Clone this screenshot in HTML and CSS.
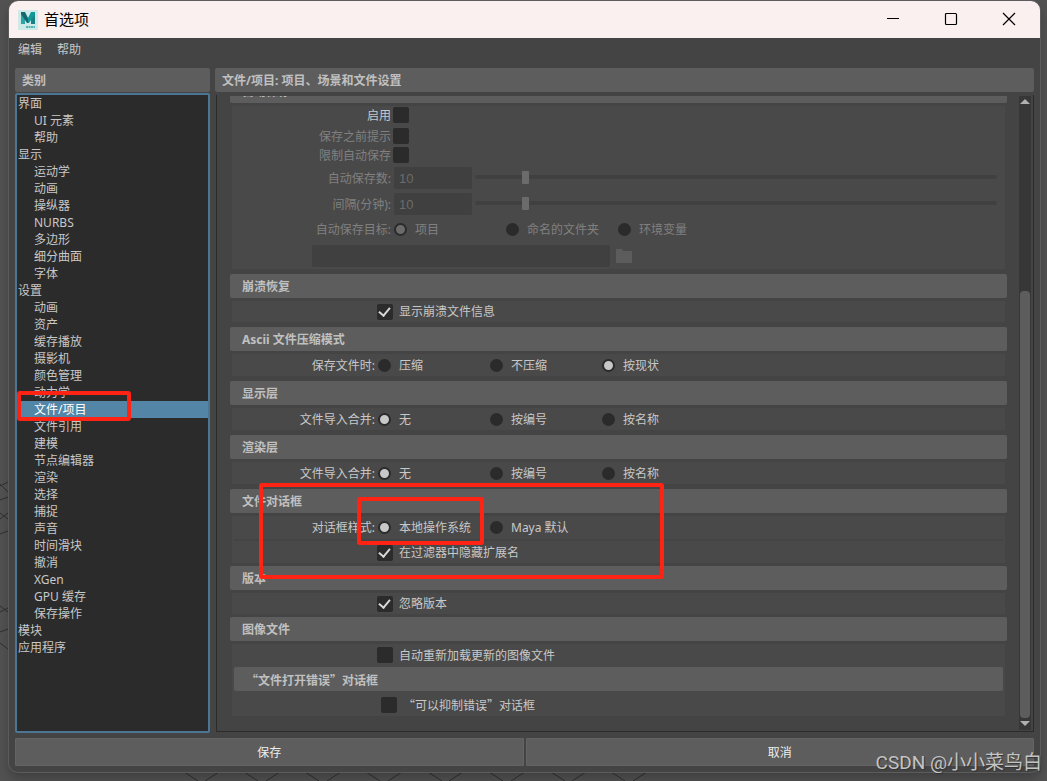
FILE: index.html
```html
<!DOCTYPE html>
<html lang="zh-CN">
<head>
  <meta charset="UTF-8" />
  <title>首选项</title>
  <link rel="stylesheet" href="styles.css">
</head>
<body>

  <!-- viewport grid behind the window -->
  <svg class="grid-lines bottom" width="1047" height="9" viewBox="0 0 1047 9" aria-hidden="true">
    <path d="M184 0l14 9M219 0l-14 9M244 0l14 9M280 0l-14 9M305 0l14 9M341 0l-14 9M366 0l14 9M402 0l-14 9M428 0l14 9M463 0l-14 9M489 0l14 9M525 0l-14 9M551 0l14 9M586 0l-14 9M611 0l14 9M647 0l-14 9" />
  </svg>
  <svg class="grid-lines left" width="9" height="781" viewBox="0 0 9 781" aria-hidden="true">
    <path d="M0 486l8-4M0 484l8 8M0 500l8-3M0 513l8 6M0 519l8-6M0 534l8-3M0 606l8 6M0 612l8-4M0 632l8-3M0 643l8 6" />
  </svg>

  <div class="window">
    <header class="titlebar">
      <svg class="logo" width="20" height="20" viewBox="0 0 20 20" aria-hidden="true">
        <rect width="20" height="20" fill="#cfe9e8" />
        <path d="M3 2h4v12H3z" fill="#2ba5a5" />
        <path d="M13 2h4v12h-4z" fill="#1b7f86" />
        <path d="M3 2h4l3 6v5H9L3 4z" fill="#16666d" />
        <path d="M17 2h-4l-3 6v5h1l6-9z" fill="#0f9a9a" />
        <path d="M8 17h9" stroke="#4fb5b5" stroke-width="2" stroke-dasharray="2 .5" />
      </svg>
      <h1>首选项</h1>
      <div class="window-buttons">
        <button type="button" aria-label="最小化">
          <svg width="14" height="14" viewBox="0 0 14 14"><path d="M1 6.500h12" /></svg>
        </button>
        <button type="button" aria-label="最大化">
          <svg width="14" height="14" viewBox="0 0 14 14"><rect x="1.500" y="1.500" width="11" height="11" rx="1" /></svg>
        </button>
        <button type="button" aria-label="关闭">
          <svg width="14" height="14" viewBox="0 0 14 14"><path d="M1 1l12 12M13 1L1 13" /></svg>
        </button>
      </div>
    </header>

    <nav class="menubar">
      <a href="#">编辑</a>
      <a href="#">帮助</a>
    </nav>

    <main class="content">
      <aside class="categories">
        <h2 class="bar">类别</h2>
        <ul class="tree">
          <li class="root">界面</li>
          <li>UI 元素</li>
          <li>帮助</li>
          <li class="root">显示</li>
          <li>运动学</li>
          <li>动画</li>
          <li>操纵器</li>
          <li>NURBS</li>
          <li>多边形</li>
          <li>细分曲面</li>
          <li>字体</li>
          <li class="root">设置</li>
          <li>动画</li>
          <li>资产</li>
          <li>缓存播放</li>
          <li>摄影机</li>
          <li>颜色管理</li>
          <li>动力学</li>
          <li class="selected">文件/项目<span class="mark mark-item"></span></li>
          <li>文件引用</li>
          <li>建模</li>
          <li>节点编辑器</li>
          <li>渲染</li>
          <li>选择</li>
          <li>捕捉</li>
          <li>声音</li>
          <li>时间滑块</li>
          <li>撤消</li>
          <li>XGen</li>
          <li>GPU 缓存</li>
          <li>保存操作</li>
          <li class="root">模块</li>
          <li class="root">应用程序</li>
        </ul>
      </aside>

      <section class="settings">
        <h2 class="bar">文件/项目: 项目、场景和文件设置</h2>
        <div class="pane">
          <div class="sections">

            <section class="group">
              <h3 class="bar">自动保存</h3>
              <div class="group-body autosave">
                <div class="row"><label class="name" for="enable">启用</label><input type="checkbox" id="enable"></div>
                <div class="row off"><label class="name" for="prompt">保存之前提示</label><input type="checkbox" id="prompt"></div>
                <div class="row off"><label class="name" for="limit">限制自动保存</label><input type="checkbox" id="limit"></div>
                <div class="row off">
                  <label class="name" for="count">自动保存数:</label>
                  <input type="text" class="number" id="count" value="10" disabled>
                  <input type="range" min="1" max="100" value="10" aria-label="自动保存数" disabled>
                </div>
                <div class="row off">
                  <label class="name" for="interval">间隔(分钟):</label>
                  <input type="text" class="number" id="interval" value="10" disabled>
                  <input type="range" min="1" max="100" value="10" aria-label="间隔(分钟)" disabled>
                </div>
                <div class="row off target">
                  <span class="name">自动保存目标:</span>
                  <label class="radio"><input type="radio" name="target" checked disabled>项目</label>
                  <label class="radio"><input type="radio" name="target" disabled>命名的文件夹</label>
                  <label class="radio"><input type="radio" name="target" disabled>环境变量</label>
                </div>
                <div class="row off path">
                  <input type="text" aria-label="自动保存路径" disabled>
                  <button type="button" aria-label="浏览" disabled>
                    <svg width="16" height="14" viewBox="0 0 16 14"><path d="M0 0h6l1 2h9v12H0z" fill="#5c5c5c" /></svg>
                  </button>
                </div>
              </div>
            </section>

            <section class="group">
              <h3 class="bar">崩溃恢复</h3>
              <div class="group-body">
                <div class="row single"><span class="name"></span><label class="check"><input type="checkbox" checked>显示崩溃文件信息</label></div>
              </div>
            </section>

            <section class="group">
              <h3 class="bar">Ascii 文件压缩模式</h3>
              <div class="group-body">
                <div class="row">
                  <span class="name">保存文件时:</span>
                  <label class="radio"><input type="radio" name="ascii">压缩</label>
                  <label class="radio"><input type="radio" name="ascii">不压缩</label>
                  <label class="radio"><input type="radio" name="ascii" checked>按现状</label>
                </div>
              </div>
            </section>

            <section class="group">
              <h3 class="bar">显示层</h3>
              <div class="group-body">
                <div class="row">
                  <span class="name">文件导入合并:</span>
                  <label class="radio"><input type="radio" name="display" checked>无</label>
                  <label class="radio"><input type="radio" name="display">按编号</label>
                  <label class="radio"><input type="radio" name="display">按名称</label>
                </div>
              </div>
            </section>

            <section class="group">
              <h3 class="bar">渲染层</h3>
              <div class="group-body">
                <div class="row">
                  <span class="name">文件导入合并:</span>
                  <label class="radio"><input type="radio" name="render" checked>无</label>
                  <label class="radio"><input type="radio" name="render">按编号</label>
                  <label class="radio"><input type="radio" name="render">按名称</label>
                </div>
              </div>
            </section>

            <section class="group tight">
              <h3 class="bar">文件对话框</h3>
              <div class="group-body">
                <div class="row">
                  <span class="name">对话框样式:</span>
                  <label class="radio"><input type="radio" name="dialog" checked>本地操作系统</label>
                  <label class="radio"><input type="radio" name="dialog">Maya 默认</label>
                </div>
                <hr>
                <div class="row single"><span class="name"></span><label class="check"><input type="checkbox" checked>在过滤器中隐藏扩展名</label></div>
              </div>
              <span class="mark mark-group"></span>
              <span class="mark mark-option"></span>
            </section>

            <section class="group tight">
              <h3 class="bar">版本</h3>
              <div class="group-body">
                <div class="row single"><span class="name"></span><label class="check"><input type="checkbox" checked>忽略版本</label></div>
              </div>
            </section>

            <section class="group">
              <h3 class="bar">图像文件</h3>
              <div class="group-body images">
                <div class="row single"><span class="name"></span><label class="check"><input type="checkbox">自动重新加载更新的图像文件</label></div>
                <h4 class="bar">“文件打开错误”对话框</h4>
                <div class="row suppress"><span class="name"></span><label class="check"><input type="checkbox">“可以抑制错误”对话框</label></div>
              </div>
            </section>

          </div>
          <div class="scrollbar">
            <span class="arrow up"></span>
            <div class="track"><div class="thumb"></div></div>
            <span class="arrow down"></span>
          </div>
        </div>
      </section>
    </main>

    <footer class="actions">
      <button type="button">保存</button>
      <button type="button">取消</button>
    </footer>
  </div>

  <div class="watermark">CSDN @小小菜鸟白</div>

</body>
</html>
```
FILE: styles.css
```css
* {
  box-sizing: border-box;
}
body {
  margin: 0;
  height: 100vh;
  padding: 1px 7px 9px 9px;
  background: #525252;
  color: #c8c8c8;
  font: 12px/17px "Noto Sans", "Noto Sans CJK SC", sans-serif;
  overflow: hidden;
  position: relative;
}
h1, h2, h3, h4, ul {
  margin: 0;
  padding: 0;
}
button, input {
  font: inherit;
  color: inherit;
}

.grid-lines {
  position: absolute;
  left: 0;
  fill: none;
  stroke: #303030;
}
.grid-lines.bottom {
  bottom: 0;
}
.grid-lines.left {
  top: 0;
}

.window {
  position: relative;
  display: flex;
  flex-direction: column;
  height: 100%;
  background: #444;
  border-radius: 9px;
  box-shadow: 0 0 0 1px #5c5c5c, 0 6px 12px rgba(0, 0, 0, 0.25);
  overflow: hidden;
}

/* title bar */
.titlebar {
  display: flex;
  align-items: center;
  flex: none;
  height: 37px;
  padding: 0 2px 0 9px;
  background: #f9f0ef;
  color: #000;
}
.titlebar h1 {
  margin-left: 6px;
  font-size: 15px;
  font-weight: normal;
}
.window-buttons {
  display: flex;
  align-self: flex-start;
  margin-left: auto;
}
.window-buttons button {
  display: flex;
  align-items: center;
  justify-content: center;
  width: 58px;
  height: 36px;
  padding: 0;
  border: none;
  background: none;
}
.window-buttons svg {
  fill: none;
  stroke: #000;
  stroke-width: 1.2;
}

.menubar {
  display: flex;
  gap: 15px;
  flex: none;
  height: 30px;
  padding: 3px 9px;
}
.menubar a {
  color: #c8c8c8;
  text-decoration: none;
}

.bar {
  height: 24px;
  padding-left: 7px;
  border-radius: 2px;
  background: #5d5d5d;
  color: #c0c0c0;
  font-size: 12px;
  line-height: 26px;
  font-weight: bold;
}

.content {
  display: flex;
  flex: 1;
  min-height: 0;
  gap: 5px;
  padding: 0 6px;
}

/* category tree */
.categories {
  display: flex;
  flex-direction: column;
  flex: none;
  width: 195px;
}
.tree {
  flex: 1;
  margin-top: 1px;
  border: 2px solid #4d7594;
  border-radius: 2px;
  background: #2b2b2b;
  list-style: none;
}
.tree li {
  height: 17px;
  padding-left: 17px;
}
.tree .root {
  padding-left: 1px;
}
.tree .selected {
  position: relative;
  background: #5285a6;
  color: #fff;
}

/* red highlight frames */
.mark {
  position: absolute;
  z-index: 1;
  border: 4px solid #ff2314;
  border-radius: 3px;
  pointer-events: none;
}
.mark-item {
  left: 0;
  top: -10px;
  width: 114px;
  height: 30px;
}
.mark-group {
  left: 29px;
  top: -6px;
  width: 405px;
  height: 96px;
}
.mark-option {
  left: 127px;
  top: 8px;
  width: 127px;
  height: 48px;
}

/* settings */
.settings {
  display: flex;
  flex-direction: column;
  flex: 1;
  min-width: 0;
}
.pane {
  display: flex;
  flex: 1;
  min-height: 0;
  margin: 3px 0 1px 1px;
  padding-top: 1px;
  border: 1px solid #2b2b2b;
  border-top: none;
}
.sections {
  flex: 1;
  min-width: 0;
  padding: 0 12px 0 13px;
  overflow: hidden;
}
.group {
  position: relative;
  margin-bottom: 5px;
}
.group:first-child {
  margin-top: -17px;
}
.group.tight {
  margin-bottom: 3px;
}
.group h3 {
  padding-left: 12px;
}
.group-body {
  margin: 3px 2px 0;
  background: #494949;
}
.group-body hr {
  height: 2px;
  margin: 1px 2px;
  border: none;
  background: #444;
}

.row {
  display: flex;
  align-items: center;
  height: 22px;
}
.row.single {
  height: 21px;
}
.row .name {
  flex: none;
  width: 144px;
  padding-right: 1px;
  text-align: right;
}
.row.off {
  color: #808080;
}
.radio {
  display: flex;
  align-items: center;
  flex: none;
  gap: 8px;
  width: 112px;
  padding-left: 2px;
  white-space: nowrap;
}
.check {
  display: flex;
  align-items: center;
  gap: 6px;
  padding-left: 1px;
}
/* full-width quotes */
.images {
  font-family: "Noto Sans CJK SC", sans-serif;
}
.images h4 {
  margin: 2px;
  padding-left: 12px;
}
.images .suppress {
  height: 23px;
}
.suppress .check {
  padding-left: 5px;
}

.autosave {
  padding: 1px 0 2px;
}
.autosave .row {
  margin-bottom: 4px;
}
.autosave .row:nth-child(-n+3) {
  height: 16px;
}
.autosave .row:first-child {
  margin-bottom: 5px;
}
.autosave .row:nth-child(2) {
  margin-bottom: 3px;
}
.autosave .name {
  width: 159px;
  padding-right: 0;
}
.autosave input[type="checkbox"] {
  margin-left: 2px;
}
.autosave .radio {
  padding-left: 3px;
}
.autosave .target {
  height: 20px;
}
.autosave .path {
  margin: 6px 0 0 80px;
}

input[type="checkbox"] {
  appearance: none;
  flex: none;
  width: 16px;
  height: 16px;
  margin: 0;
  border-radius: 2px;
  background: #2b2b2b;
}
input[type="checkbox"]:checked::before {
  content: "";
  display: block;
  width: 5px;
  height: 9px;
  margin: 1px 0 0 4px;
  border: solid #d8d8d8;
  border-width: 0 2px 2px 0;
  transform: rotate(40deg);
}
input[type="radio"] {
  appearance: none;
  flex: none;
  width: 13px;
  height: 13px;
  margin: 0;
  border: 2px solid #2b2b2b;
  border-radius: 50%;
  background: #2b2b2b;
}
input[type="radio"]:checked {
  background: #c8c8c8;
}
input[type="radio"]:checked:disabled {
  background: #6b6b6b;
}
input[type="text"] {
  width: 298px;
  height: 22px;
  padding: 0 5px;
  border: none;
  border-radius: 2px;
  background: #404040;
  color: #6b6b6b;
}
input.number {
  width: 78px;
  margin-left: 3px;
  font-family: "Liberation Sans", sans-serif;
  font-size: 13px;
}
input[type="range"] {
  appearance: none;
  flex: 1;
  height: 4px;
  margin: 0 8px 2px 3px;
  border-radius: 2px;
  background: #404040;
}
input[type="range"]::-webkit-slider-thumb {
  appearance: none;
  width: 7px;
  height: 13px;
  border-radius: 1px;
  background: #6b6b6b;
}
.path button {
  display: flex;
  margin-left: 6px;
  padding: 0;
  border: none;
  background: none;
}

.scrollbar {
  display: flex;
  flex-direction: column;
  align-items: center;
  flex: none;
  width: 12px;
  margin: 0 2px 1px 0;
  background: #373737;
}
.arrow {
  margin: 3px 0 4px;
  border: 5px solid transparent;
}
.arrow.up {
  border-top: none;
  border-bottom-color: #b0b0b0;
}
.arrow.down {
  border-bottom: none;
  border-top-color: #b0b0b0;
}
.track {
  display: flex;
  flex-direction: column;
  justify-content: flex-end;
  flex: 1;
}
.thumb {
  width: 10px;
  height: 70%;
  border-radius: 4px;
  background: #5d5d5d;
}

.actions {
  display: flex;
  gap: 2px;
  flex: none;
  padding: 5px 6px 6px;
}
.actions button {
  flex: 1;
  height: 28px;
  padding: 0;
  border: 1px solid #646464;
  border-radius: 1px;
  background: #5d5d5d;
  color: #eee;
}

.watermark {
  position: absolute;
  right: 5px;
  bottom: 4px;
  color: #c4c4c4;
  font: 19px/28px Roboto, "Noto Sans CJK SC", sans-serif;
  text-shadow: 1px 1px 1px #333;
}
```
